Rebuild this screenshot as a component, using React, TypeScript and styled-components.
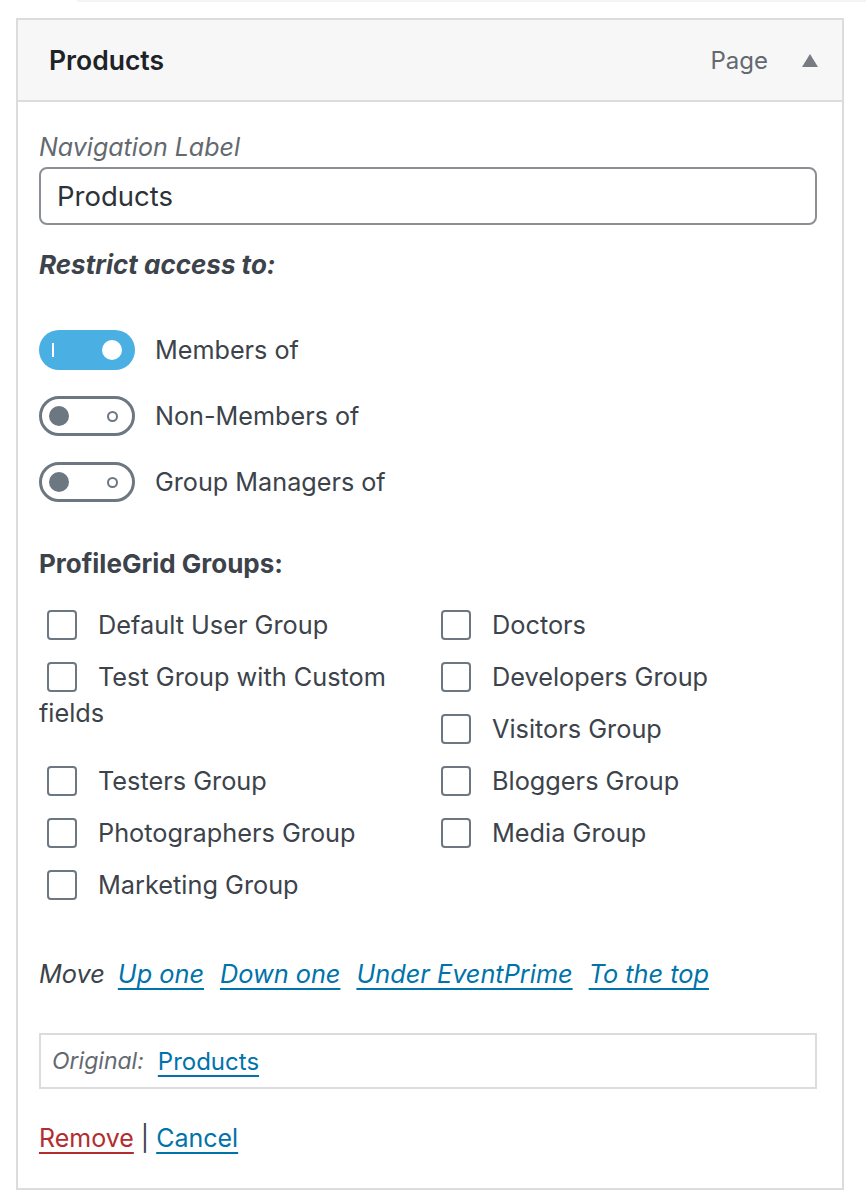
import React from "react";
import styled, { createGlobalStyle } from "styled-components";

const GlobalStyle = createGlobalStyle`
  html, body { margin: 0; padding: 0; background: #ffffff; }
  body { font-family: Inter, "Noto Sans", "Liberation Sans", sans-serif; color: #3c434a; }
  * { box-sizing: border-box; }
`;

const TopEdge = styled.div`
  height: 2px;
  margin-left: 77px;
  background: #f3f4f4;
`;

const Card = styled.div`
  margin: 16px 22px 0 16px;
  border: 2px solid #dcdcde;
  background: #fff;
`;

const Header = styled.div`
  height: 82px;
  display: flex;
  align-items: center;
  padding: 0 24px 0 31px;
  background: #f7f7f7;
  border-bottom: 2px solid #dcdcde;
`;

const Title = styled.h3`
  margin: 0;
  flex: 1;
  font-size: 26.5px;
  font-weight: 600;
  color: #1d2327;
`;

const ItemType = styled.span`
  font-size: 24px;
  color: #646970;
  margin-right: 34px;
`;

const Body = styled.div`
  padding: 27px 25px 32px 21px;
`;

const FieldLabel = styled.div`
  font-size: 25px;
  line-height: 36px;
  font-style: italic;
  color: #646970;
`;

const TextInput = styled.div`
  margin-top: 2px;
  height: 58px;
  border: 2px solid #8c8f94;
  border-radius: 8px;
  display: flex;
  align-items: center;
  padding: 0 16px;
  font-size: 27.5px;
  color: #2c3338;
`;

const SectionTitle = styled.div<{ $italic?: boolean; $mt: number }>`
  margin-top: ${(p) => p.$mt}px;
  font-size: 26px;
  line-height: 36px;
  font-weight: 700;
  font-style: ${(p) => (p.$italic ? "italic" : "normal")};
  color: #3c434a;
`;

const ToggleList = styled.div`
  margin-top: 47px;
  display: flex;
  flex-direction: column;
  gap: 26px;
`;

const ToggleRow = styled.label`
  display: flex;
  align-items: center;
  gap: 20px;
  font-size: 25.2px;
  color: #3c434a;
`;

const Track = styled.span<{ $on: boolean }>`
  width: 96px;
  height: 40px;
  border-radius: 20px;
  display: flex;
  align-items: center;
  justify-content: space-between;
  background: ${(p) => (p.$on ? "#4ab0e3" : "#fff")};
  border: ${(p) => (p.$on ? "none" : "3px solid #6c7781")};
  padding: ${(p) => (p.$on ? "0 13px 0 13px" : "0 14px 0 7px")};
`;

const OnMark = styled.span`
  width: 2px;
  height: 14px;
  background: #fff;
`;

const Knob = styled.span<{ $on: boolean }>`
  width: 20px;
  height: 20px;
  border-radius: 50%;
  background: ${(p) => (p.$on ? "#fff" : "#6c7781")};
`;

const OffRing = styled.span`
  width: 11px;
  height: 11px;
  border-radius: 50%;
  border: 2px solid #6c7781;
`;

const Groups = styled.div`
  margin-top: 17px;
  display: flex;
`;

const GroupColumn = styled.div<{ $width?: number }>`
  width: ${(p) => (p.$width ? `${p.$width}px` : "auto")};
  flex: ${(p) => (p.$width ? "none" : "1")};
`;

const GroupItem = styled.label<{ $extra?: number }>`
  display: block;
  padding: 8px 0;
  margin-bottom: ${(p) => p.$extra ?? 0}px;
  font-size: 25.3px;
  line-height: 36px;
  color: #3c434a;
`;

const Box = styled.span`
  display: inline-block;
  width: 30px;
  height: 30px;
  border: 2px solid #6c7781;
  border-radius: 4px;
  margin: 0 21px 0 8px;
  vertical-align: -6px;
`;

const MoveLine = styled.div`
  margin-top: 45px;
  font-size: 25.3px;
  line-height: 36px;
  font-style: italic;
  color: #3c434a;
  display: flex;
  gap: 16px;
`;

const MoveWord = styled.span`
  margin-right: -3px;
`;

const Link = styled.a<{ $danger?: boolean }>`
  color: ${(p) => (p.$danger ? "#b32d2e" : "#0073aa")};
  text-decoration: underline;
  text-underline-offset: 5px;
  text-decoration-thickness: 2px;
  cursor: pointer;
`;

const Original = styled.div`
  margin-top: 41px;
  height: 56px;
  border: 2px solid #dcdcde;
  display: flex;
  align-items: center;
  padding: 0 11px;
  gap: 14px;
  font-size: 24px;
`;

const OriginalLabel = styled.span`
  font-size: 23px;
  font-style: italic;
  color: #646970;
`;

const Actions = styled.div`
  margin-top: 31px;
  font-size: 25px;
  line-height: 36px;
  color: #3c434a;
`;

const Sep = styled.span`
  margin: 0 7px;
`;

const leftGroups: [string, number?][] = [
  ["Default User Group"],
  ["Test Group with Custom fields", 16],
  ["Testers Group"],
  ["Photographers Group"],
  ["Marketing Group"],
];

const rightGroups = [
  "Doctors",
  "Developers Group",
  "Visitors Group",
  "Bloggers Group",
  "Media Group",
];

const toggles: [string, boolean][] = [
  ["Members of", true],
  ["Non-Members of", false],
  ["Group Managers of", false],
];

function Toggle({ on }: { on: boolean }) {
  return (
    <Track $on={on}>
      {on ? <OnMark /> : <Knob $on={false} />}
      {on ? <Knob $on /> : <OffRing />}
    </Track>
  );
}

function Triangle() {
  return (
    <svg width="16" height="13" viewBox="0 0 16 13">
      <path d="M8 0 L16 13 L0 13 Z" fill="#787c82" />
    </svg>
  );
}

export default function App() {
  return (
    <>
      <GlobalStyle />
      <TopEdge />
      <Card>
        <Header>
          <Title>Products</Title>
          <ItemType>Page</ItemType>
          <Triangle />
        </Header>
        <Body>
          <FieldLabel>Navigation Label</FieldLabel>
          <TextInput>Products</TextInput>
          <SectionTitle $italic $mt={22}>
            Restrict access to:
          </SectionTitle>
          <ToggleList>
            {toggles.map(([label, on]) => (
              <ToggleRow key={label}>
                <Toggle on={on} />
                {label}
              </ToggleRow>
            ))}
          </ToggleList>
          <SectionTitle $mt={44}>ProfileGrid Groups:</SectionTitle>
          <Groups>
            <GroupColumn $width={394}>
              {leftGroups.map(([name, extra]) => (
                <GroupItem key={name} $extra={extra}>
                  <Box />
                  {name}
                </GroupItem>
              ))}
            </GroupColumn>
            <GroupColumn>
              {rightGroups.map((name) => (
                <GroupItem key={name}>
                  <Box />
                  {name}
                </GroupItem>
              ))}
            </GroupColumn>
          </Groups>
          <MoveLine>
            <MoveWord>Move</MoveWord>
            <Link>Up one</Link>
            <Link>Down one</Link>
            <Link>Under EventPrime</Link>
            <Link>To the top</Link>
          </MoveLine>
          <Original>
            <OriginalLabel>Original:</OriginalLabel>
            <Link>Products</Link>
          </Original>
          <Actions>
            <Link $danger>Remove</Link>
            <Sep>|</Sep>
            <Link>Cancel</Link>
          </Actions>
        </Body>
      </Card>
    </>
  );
}
